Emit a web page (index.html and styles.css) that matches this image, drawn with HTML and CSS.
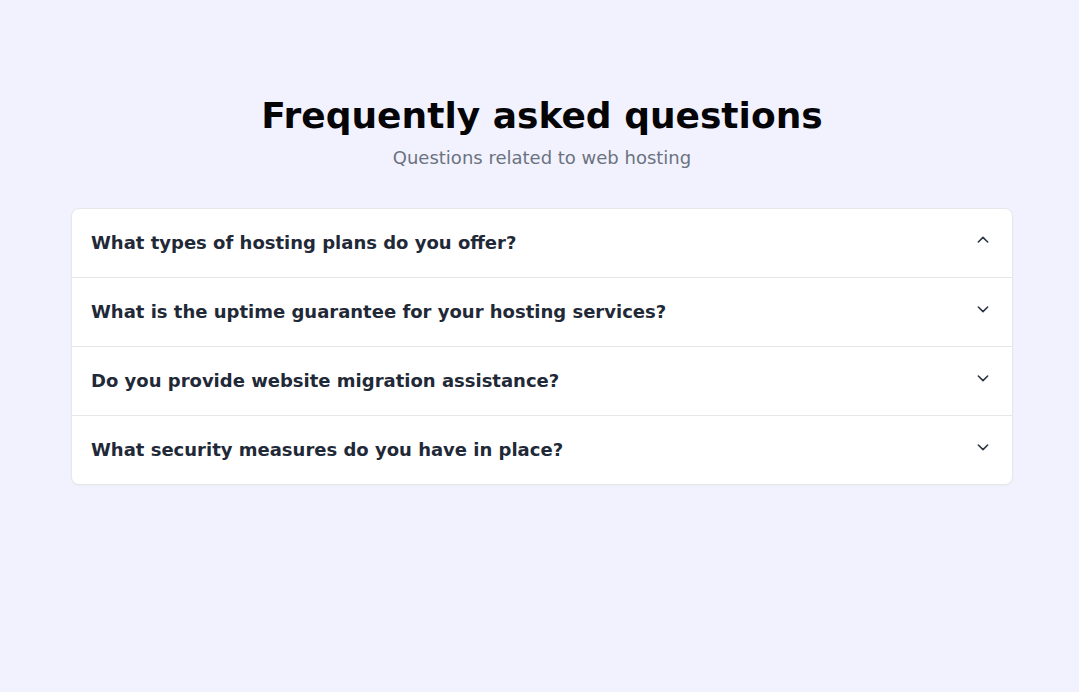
FILE: index.html
```html
<!DOCTYPE html>
<html lang="en">
<head>
<meta charset="utf-8">
<title>FAQ</title>
<link rel="stylesheet" href="styles.css">
</head>
<body>
<main class="page">
  <header class="intro">
    <h1 class="title">Frequently asked questions</h1>
    <p class="subtitle">Questions related to web hosting</p>
  </header>
  <section class="faq">
    <div class="item">
      <span class="question">What types of hosting plans do you offer?</span>
      <svg class="chev" viewBox="0 0 24 24" width="16" height="16"><path d="M5 15l7-7 7 7"/></svg>
    </div>
    <div class="item">
      <span class="question">What is the uptime guarantee for your hosting services?</span>
      <svg class="chev" viewBox="0 0 24 24" width="16" height="16"><path d="M19 9l-7 7-7-7"/></svg>
    </div>
    <div class="item">
      <span class="question">Do you provide website migration assistance?</span>
      <svg class="chev" viewBox="0 0 24 24" width="16" height="16"><path d="M19 9l-7 7-7-7"/></svg>
    </div>
    <div class="item">
      <span class="question">What security measures do you have in place?</span>
      <svg class="chev" viewBox="0 0 24 24" width="16" height="16"><path d="M19 9l-7 7-7-7"/></svg>
    </div>
  </section>
</main>
</body>
</html>
```
FILE: styles.css
```css
* { box-sizing: border-box; }
html, body { margin: 0; padding: 0; }
body {
  background: #f2f2fe;
  font-family: "DejaVu Sans", sans-serif;
  min-height: 692px;
}
.page {
  padding: 96px 66px 0 71px;
}
.intro {
  text-align: center;
  margin-bottom: 36px;
}
.title {
  margin: 0;
  font-size: 36px;
  line-height: 40px;
  font-weight: 700;
  color: #050507;
}
.subtitle {
  margin: 8px 0 0;
  font-size: 18px;
  line-height: 28px;
  color: #6b7280;
}
.faq {
  background: #ffffff;
  border: 1px solid #e5e7eb;
  border-radius: 8px;
  overflow: hidden;
  box-shadow: 0 1px 2px rgba(0,0,0,0.03);
}
.item {
  display: flex;
  align-items: center;
  justify-content: space-between;
  height: 69px;
  padding: 0 21px 2px 19px;
  border-top: 1px solid #e5e7eb;
}
.item:first-child { border-top: none; height: 68px; }
.question {
  font-size: 18px;
  font-weight: 700;
  color: #1f2937;
}
.chev {
  fill: none;
  stroke: #2f3744;
  stroke-width: 2.4;
  stroke-linecap: round;
  stroke-linejoin: round;
  margin-top: -5px;
}
```
